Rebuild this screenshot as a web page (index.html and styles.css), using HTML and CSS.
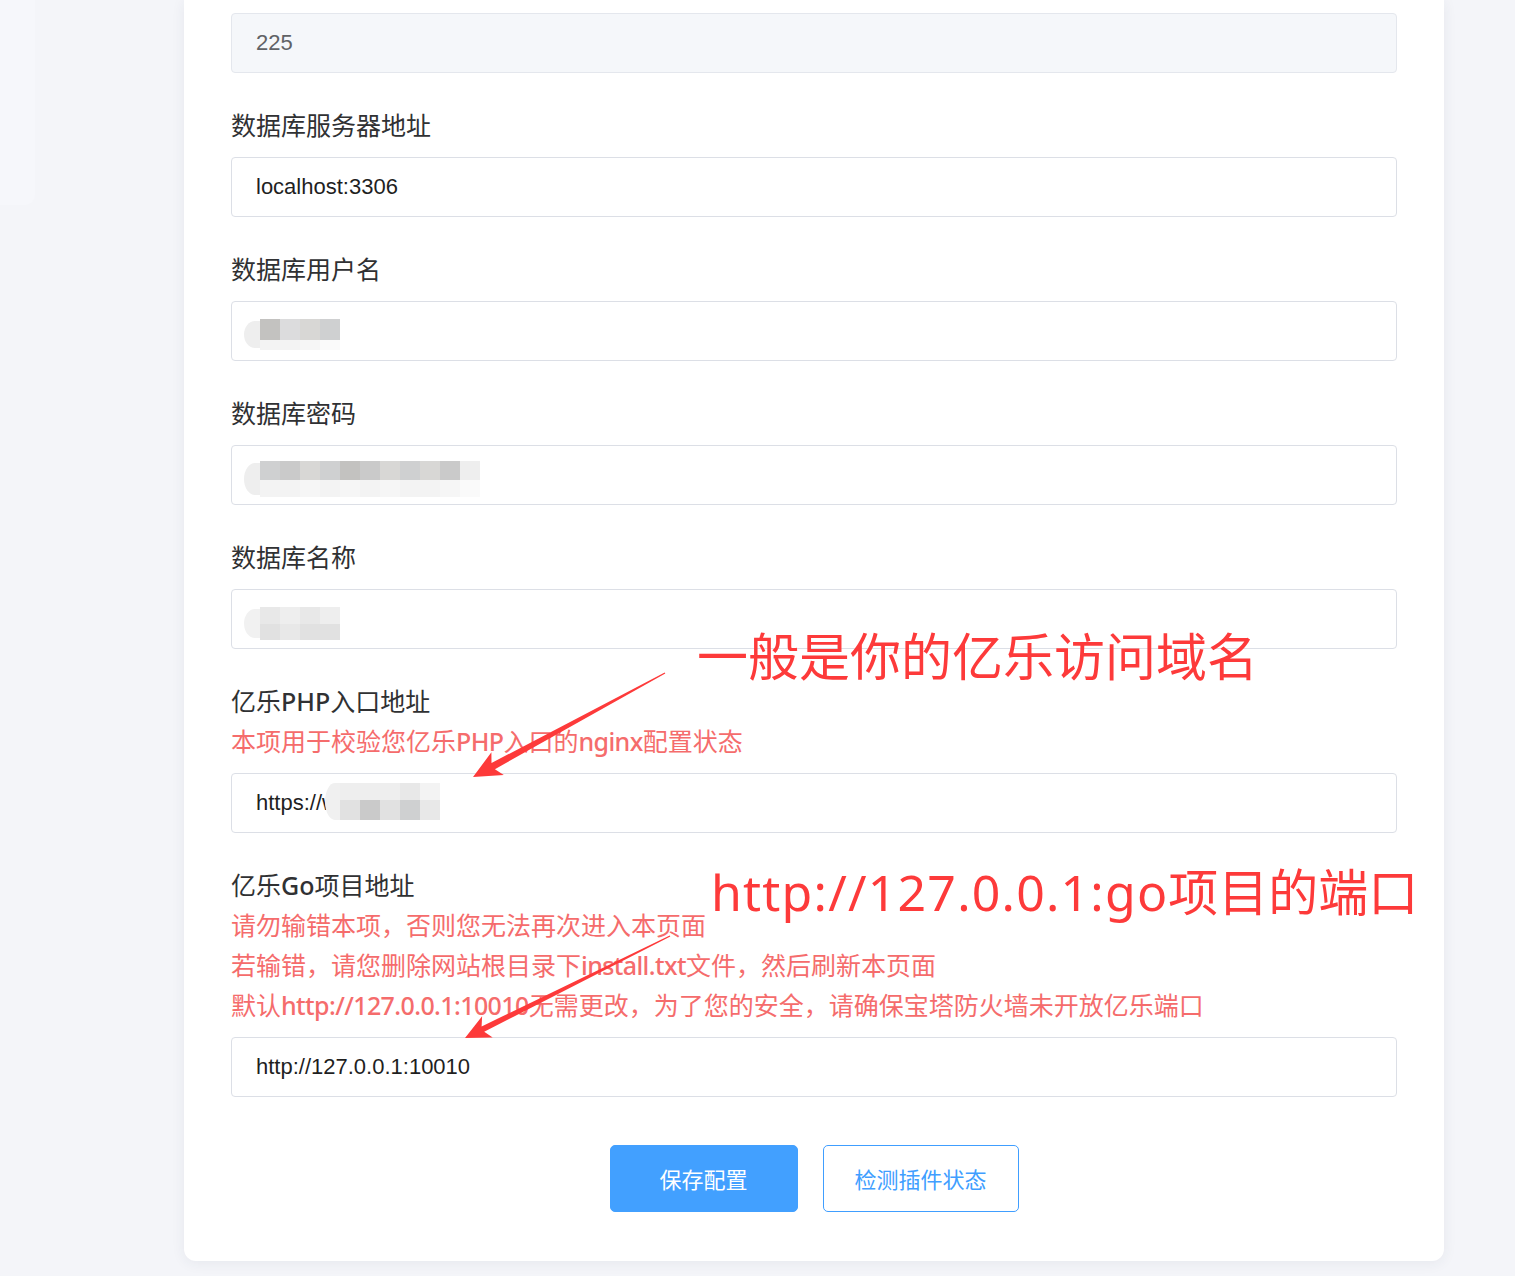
FILE: index.html
```html
<!DOCTYPE html>
<html lang="zh-CN">
<head>
<meta charset="utf-8">
<title>亿乐插件配置</title>
<link rel="stylesheet" href="styles.css">
</head>
<body>
<div class="page">
  <aside class="side"></aside>
  <main class="card">
    <div class="input is-disabled">225</div>

    <div class="item">
      <div class="label">数据库服务器地址</div>
      <div class="input">localhost:3306</div>
    </div>

    <div class="item">
      <div class="label">数据库用户名</div>
      <div class="input">
        <div class="mosaic m-user">
          <div class="row ra"><i class="g1"></i><i class="g5"></i><i class="g4"></i><i class="g3"></i></div>
          <div class="row rb"><i class="g9"></i><i class="g9"></i><i class="g10"></i><i class="g11"></i></div>
        </div>
      </div>
    </div>

    <div class="item">
      <div class="label">数据库密码</div>
      <div class="input">
        <div class="mosaic m-pass">
          <div class="row ra"><i class="g3"></i><i class="g2"></i><i class="g4"></i><i class="g3"></i><i class="g1"></i><i class="g2"></i><i class="g4"></i><i class="g3"></i><i class="g4"></i><i class="g2"></i><i class="g8"></i></div>
          <div class="row rb"><i class="g9"></i><i class="g9"></i><i class="g10"></i><i class="g9"></i><i class="g10"></i><i class="g9"></i><i class="g10"></i><i class="g9"></i><i class="g9"></i><i class="g10"></i><i class="g11"></i></div>
        </div>
      </div>
    </div>

    <div class="item">
      <div class="label">数据库名称</div>
      <div class="input">
        <div class="mosaic m-name">
          <div class="row ra"><i class="g7"></i><i class="g8"></i><i class="g7"></i><i class="g8"></i></div>
          <div class="row rb"><i class="g6"></i><i class="g7"></i><i class="g6"></i><i class="g6"></i></div>
        </div>
      </div>
    </div>

    <div class="item">
      <div class="label">亿乐<span class="en">PHP</span>入口地址
        <div class="tip">本项用于校验您亿乐<span class="en">PHP</span>入口的<span class="en">nginx</span>配置状态</div>
      </div>
      <div class="input"><span class="value">https://w</span><div class="mosaic m-php">
          <div class="row ra"><i class="g8"></i><i class="g8"></i><i class="g8"></i><i class="g7"></i><i class="g9"></i></div>
          <div class="row rb"><i class="g6"></i><i class="g2"></i><i class="g6"></i><i class="g3"></i><i class="g7"></i></div>
        </div>
      </div>
    </div>

    <div class="item">
      <div class="label">亿乐<span class="en">Go</span>项目地址
        <div class="tip">请勿输错本项，否则您无法再次进入本页面</div>
        <div class="tip">若输错，请您删除网站根目录下<span class="en">install.txt</span>文件，然后刷新本页面</div>
        <div class="tip">默认<span class="en">http://127.0.0.1:10010</span>无需更改，为了您的安全，请确保宝塔防火墙未开放亿乐端口</div>
      </div>
      <div class="input">http://127.0.0.1:10010</div>
    </div>

    <div class="actions">
      <button class="btn btn-primary" type="button">保存配置</button>
      <button class="btn btn-plain" type="button">检测插件状态</button>
    </div>
  </main>

  <div class="note note-domain">一般是你的亿乐访问域名</div>
  <div class="note note-port"><span class="note-en">http://127.0.0.1:go</span>项目的端口</div>

  <svg class="arrows" width="1515" height="1276" viewBox="0 0 1515 1276" aria-hidden="true">
    <polygon points="665.3,673.5 494.9,769.2 503.8,775.1 473,777 491.4,752.3 491.5,763.0 664.7,672.5"/>
    <polygon points="670.3,936.5 484.2,1031.8 492.7,1037.6 465,1038 482.1,1016.2 481.6,1026.4 669.7,935.5"/>
  </svg>
</div>
</body>
</html>
```

FILE: styles.css
```css
* { box-sizing: border-box; }

html, body {
  margin: 0;
  background: #f4f5f9;
}

body {
  font-family: "Noto Sans", "Noto Sans CJK SC", sans-serif;
}

.page {
  position: relative;
  width: 1515px;
  height: 1276px;
  overflow: hidden;
  display: flex;
  align-items: flex-start;
}

.side {
  flex: none;
  width: 35px;
  height: 205px;
  background: #f6f7fb;
  border-radius: 0 0 10px 0;
}

.card {
  flex: none;
  margin-left: 149px;
  width: 1260px;
  background: #ffffff;
  border-radius: 0 0 12px 12px;
  box-shadow: 0 2px 14px rgba(40, 50, 90, 0.07);
  padding: 13px 47px 49px;
}

.item { margin-top: 31px; }

.label {
  font-family: "Noto Sans CJK SC", sans-serif;
  font-size: 25px;
  line-height: 40px;
  color: #303133;
  padding-bottom: 13px;
}

.tip { color: #f56c6c; }

.en {
  font-family: "Noto Sans", sans-serif;
  font-weight: 500;
  line-height: 1;
}

.tip .en { letter-spacing: -0.6px; }

.input {
  height: 60px;
  border: 1px solid #dcdfe6;
  border-radius: 4px;
  padding: 0 24px;
  display: flex;
  align-items: center;
  font-family: "Liberation Sans", Arial, sans-serif;
  font-size: 22px;
  color: #1f1f1f;
  background: #ffffff;
  white-space: nowrap;
}

.input.is-disabled {
  background: #f5f7fa;
  border-color: #e4e7ed;
  color: #606266;
}

/* blurred / pixelated private values */
.mosaic {
  position: relative;
  display: flex;
  flex-direction: column;
  filter: blur(0.4px);
}
.mosaic::before {
  content: "";
  position: absolute;
  left: -16px;
  top: 2px;
  bottom: 2px;
  width: 22px;
  background: #eeeeee;
  border-radius: 50% 0 0 50%;
}
.mosaic .row { display: flex; position: relative; }
.mosaic i { display: block; width: 20px; height: 100%; }

.m-user { margin: 7px 0 0 4px; }
.m-user .ra { height: 21px; }
.m-user .rb { height: 10px; }

.m-pass { margin: 8px 0 0 4px; }
.m-pass .ra { height: 19px; }
.m-pass .rb { height: 17px; }

.m-name { margin: 9px 0 0 4px; }
.m-name .ra { height: 17px; }
.m-name .rb { height: 16px; }
.m-name::before { background: #f1f1f1; }

.m-php { margin: -3px 0 0 2px; }
.m-php .ra { height: 17px; }
.m-php .rb { height: 20px; }
.m-php::before { background: #f0f0f0; left: -15px; width: 20px; top: 0; bottom: 0; }

.g1 { background: #c3c2c0; }
.g2 { background: #cacaca; }
.g3 { background: #cfd0d1; }
.g4 { background: #d8d7d5; }
.g5 { background: #dcdcdd; }
.g6 { background: #e1e1e1; }
.g7 { background: #e8e8e8; }
.g8 { background: #eeeeee; }
.g9 { background: #f3f3f3; }
.g10 { background: #f6f6f6; }
.g11 { background: #fafafa; }

.actions {
  display: flex;
  justify-content: center;
  gap: 25px;
  margin-top: 48px;
}

.btn {
  height: 67px;
  border-radius: 5px;
  font-family: "Noto Sans CJK SC", sans-serif;
  font-size: 22px;
  padding: 0 0 2px;
  cursor: pointer;
}

.btn-primary {
  width: 188px;
  background: #42a0ff;
  border: 1px solid #42a0ff;
  color: #ffffff;
}

.btn-plain {
  width: 196px;
  background: #ffffff;
  border: 1px solid #409eff;
  color: #409eff;
}

/* screenshot annotations */
.note {
  position: absolute;
  color: #fd3a3a;
  white-space: nowrap;
  line-height: 1;
}

.note-domain {
  left: 697px;
  top: 629px;
  font-family: "Noto Sans CJK SC", sans-serif;
  font-size: 51px;
}

.note-port {
  left: 711px;
  top: 867px;
  font-family: "Noto Sans", "Noto Sans CJK SC", sans-serif;
  font-size: 50px;
}

.note-en { letter-spacing: 1.2px; }

.arrows {
  position: absolute;
  left: 0;
  top: 0;
  pointer-events: none;
}
.arrows polygon { fill: #fd3a3a; }
```
